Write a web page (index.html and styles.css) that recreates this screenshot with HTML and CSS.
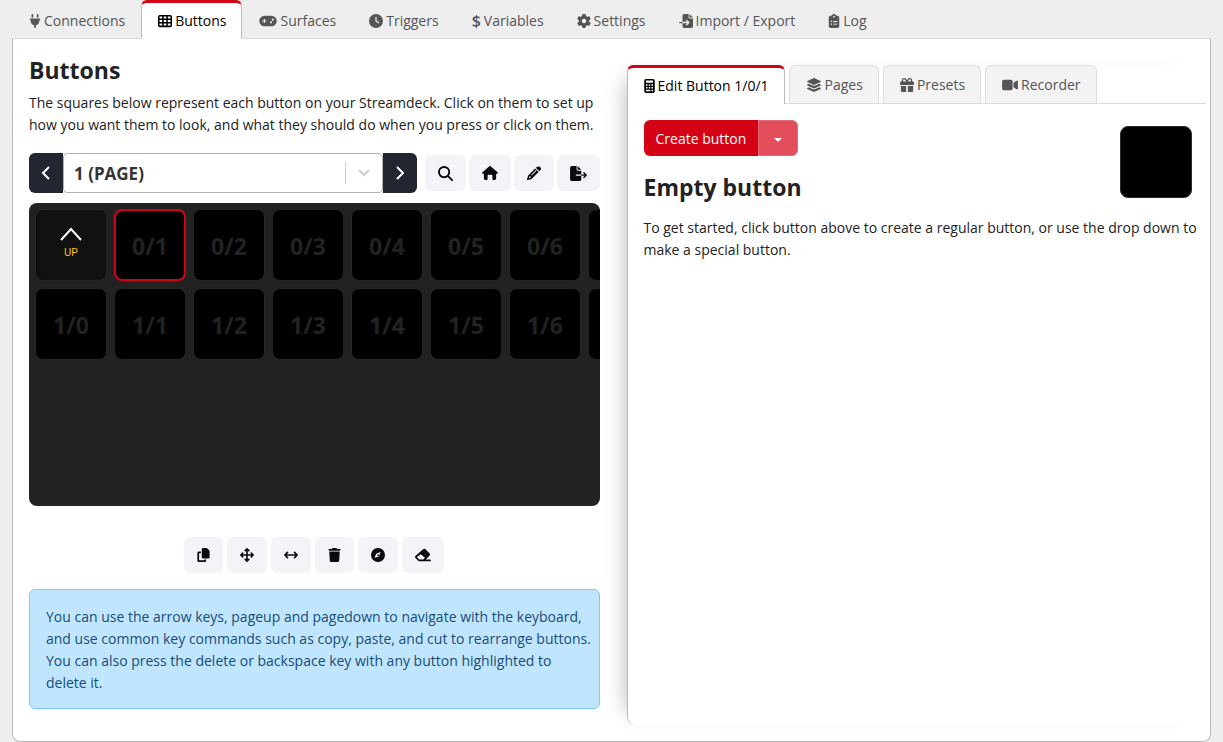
FILE: index.html
```
<!DOCTYPE html>
<html lang="en">
<head>
    <meta charset="UTF-8">
    <meta name="viewport" content="width=device-width, initial-scale=1.0">
    <title>Buttons</title>
    <link rel="stylesheet" href="styles.css">
</head>
<body>

<div class="app">
    <nav class="tabs main-tabs">
        <a class="tab" href="#connections"><svg class="icon w12" viewBox="0 0 384 512"><path d="M96 0C78.300 0 64 14.300 64 32v96h64V32c0-17.700-14.300-32-32-32zM288 0c-17.700 0-32 14.300-32 32v96h64V32c0-17.700-14.300-32-32-32zM32 160c-17.700 0-32 14.300-32 32s14.300 32 32 32v32c0 77.400 55 142 128 156.800V480c0 17.700 14.300 32 32 32s32-14.300 32-32V412.800C297 398 352 333.400 352 256V224c17.700 0 32-14.300 32-32s-14.300-32-32-32H32z"/></svg>Connections</a>
        <a class="tab active" href="#buttons"><svg class="icon w14" viewBox="0 0 512 512"><path fill-rule="evenodd" d="M64 32h384a64 64 0 0 1 64 64v320a64 64 0 0 1-64 64H64a64 64 0 0 1-64-64V96a64 64 0 0 1 64-64zM56 88v80h96V88zM208 88v80h96V88zM360 88v80h96V88zM56 216v80h96v-80zM208 216v80h96v-80zM360 216v80h96v-80zM56 344v80h96v-80zM208 344v80h96v-80zM360 344v80h96v-80z"/></svg>Buttons</a>
        <a class="tab" href="#surfaces"><svg class="icon w18" viewBox="0 0 640 512"><path fill-rule="evenodd" d="M192 64a192 192 0 0 0 0 384h256a192 192 0 0 0 0-384zM168 184h40v52h52v40h-52v52h-40v-52h-52v-40h52zM432 264a40 40 0 1 1 0 80a40 40 0 1 1 0-80zM496 168a40 40 0 1 1 0 80a40 40 0 1 1 0-80z"/></svg>Surfaces</a>
        <a class="tab" href="#triggers"><svg class="icon w14" viewBox="0 0 512 512"><path fill-rule="evenodd" d="M256 0a256 256 0 1 1 0 512A256 256 0 1 1 256 0zM232 120V256c0 8 4 15.500 10.700 20l96 64c11 7.400 25.900 4.400 33.300-6.700s4.400-25.900-6.700-33.300L280 243.200V120c0-13.300-10.700-24-24-24s-24 10.700-24 24z"/></svg>Triggers</a>
        <a class="tab" href="#variables"><span class="dollar">$</span>Variables</a>
        <a class="tab" href="#settings"><svg class="icon w14" viewBox="0 0 512 512"><path fill-rule="evenodd" d="M495.900 166.600c3.200 8.700 .5 18.400-6.400 24.600l-43.300 39.400c1.100 8.300 1.700 16.800 1.700 25.400s-.6 17.100-1.700 25.400l43.300 39.400c6.900 6.200 9.600 15.900 6.400 24.600c-4.400 11.900-9.700 23.300-15.800 34.300l-4.700 8.100c-6.600 11-14 21.400-22.100 31.200c-5.900 7.200-15.700 9.600-24.500 6.800l-55.700-17.700c-13.400 10.300-28.200 18.900-44 25.400l-12.500 57.100c-2 9.100-9 16.300-18.200 17.800c-13.800 2.300-28 3.500-42.500 3.500s-28.700-1.200-42.500-3.500c-9.200-1.500-16.200-8.700-18.200-17.800l-12.500-57.100c-15.800-6.500-30.600-15.100-44-25.400L83.100 425.900c-8.800 2.800-18.600 .3-24.500-6.800c-8.100-9.800-15.500-20.200-22.100-31.200l-4.700-8.100c-6.100-11-11.400-22.400-15.800-34.300c-3.200-8.700-.5-18.400 6.400-24.600l43.300-39.400C64.600 273.100 64 264.600 64 256s.6-17.100 1.700-25.400L22.400 191.200c-6.900-6.200-9.600-15.900-6.400-24.600c4.400-11.900 9.700-23.300 15.800-34.300l4.700-8.100c6.600-11 14-21.400 22.100-31.200c5.900-7.200 15.700-9.600 24.500-6.800l55.700 17.700c13.400-10.300 28.200-18.900 44-25.400l12.500-57.100c2-9.100 9-16.300 18.200-17.800C227.300 1.200 241.500 0 256 0s28.700 1.200 42.500 3.500c9.200 1.500 16.200 8.700 18.200 17.800l12.500 57.100c15.800 6.500 30.600 15.100 44 25.400l55.700-17.700c8.800-2.800 18.600-.3 24.500 6.800c8.100 9.800 15.500 20.200 22.100 31.200l4.700 8.100c6.100 11 11.400 22.400 15.800 34.300zM256 336a80 80 0 1 0 0-160 80 80 0 1 0 0 160z"/></svg>Settings</a>
        <a class="tab" href="#import-export"><svg class="icon w14" viewBox="0 0 512 512"><path d="M128 64c0-35.300 28.700-64 64-64H352V128c0 17.700 14.300 32 32 32H512V448c0 35.300-28.700 64-64 64H192c-35.300 0-64-28.700-64-64V336H302.100l-39 39c-9.400 9.400-9.400 24.600 0 33.900s24.600 9.400 33.900 0l80-80c9.400-9.400 9.400-24.600 0-33.900l-80-80c-9.400-9.400-24.600-9.400-33.900 0s-9.400 24.600 0 33.900l39 39H128V64zm0 224v48H24c-13.300 0-24-10.700-24-24s10.700-24 24-24H128zM512 128H384V0L512 128z"/></svg>Import / Export</a>
        <a class="tab" href="#log"><svg class="icon w12" viewBox="0 0 384 512"><path fill-rule="evenodd" d="M192 0c-42 0-77 27-90 64H64a64 64 0 0 0-64 64v320a64 64 0 0 0 64 64h256a64 64 0 0 0 64-64V128a64 64 0 0 0-64-64h-38c-13-37-48-64-90-64zM192 64a32 32 0 1 1 0 64a32 32 0 1 1 0-64zM72 248h48v48H72zM160 256h152v32H160zM72 344h48v48H72zM160 352h152v32H160z"/></svg>Log</a>
    </nav>

    <main class="panel">
        <section class="grid-side">
            <h1>Buttons</h1>
            <p class="intro">The squares below represent each button on your Streamdeck. Click on them to set up how you want them to look, and what they should do when you press or click on them.</p>

            <div class="toolbar">
                <div class="page-picker">
                    <button class="page-btn prev" aria-label="Previous page"><svg class="arrow" viewBox="0 0 16 16"><path d="M11 2L5 8l6 6"/></svg></button>
                    <div class="page-select">
                        <select aria-label="Page">
                            <option>1 (PAGE)</option>
                        </select>
                        <span class="indicator"><svg viewBox="0 0 16 16"><path d="M3 5l5 5 5-5"/></svg></span>
                    </div>
                    <button class="page-btn next" aria-label="Next page"><svg class="arrow" viewBox="0 0 16 16"><path d="M5 2l6 6-6 6"/></svg></button>
                </div>
                <button class="btn" aria-label="Search"><svg class="icon w15" viewBox="0 0 512 512"><path fill="none" stroke="currentColor" stroke-width="64" stroke-linecap="round" d="M208 32a176 176 0 1 1 0 352a176 176 0 1 1 0-352zM336 336l144 144"/></svg></button>
                <button class="btn" aria-label="Home"><svg class="icon w16" viewBox="0 0 576 512"><path d="M575.800 255.500c0 18-15 32.100-32 32.100h-32l.7 160.200c0 35-20 64-56 64H416c-22 0-40-18-40-40V352c0-18-14-32-32-32H232c-18 0-32 14-32 32v120c0 22-18 40-40 40H128c-36 0-64-28-64-64V287.600H32c-18 0-32-14-32-32.100c0-9 3-17 10-24L266.400 8c7-7 15-8 22-8s15 2 21 7L564.800 231.500c8 7 12 15 11 24z"/></svg></button>
                <button class="btn" aria-label="Edit page"><svg class="icon w14" viewBox="0 0 512 512"><path fill-rule="evenodd" d="M410 19a64 64 0 0 1 45 0l38 38a64 64 0 0 1 0 90l-46 46L319 65zM296 88l128 128-250 250a64 64 0 0 1-27 16L24 511a20 20 0 0 1-24-24l36-123a64 64 0 0 1 16-27zM326 150L148 328l20 20 178-178zM90 372l-24 74 74-24-8-42z"/></svg></button>
                <button class="btn" aria-label="Export page"><svg class="icon w17" viewBox="0 0 576 512"><path d="M0 64C0 28.700 28.700 0 64 0H224V128c0 17.700 14.300 32 32 32H384V288H216c-13.300 0-24 10.700-24 24s10.700 24 24 24H384V448c0 35.300-28.700 64-64 64H64c-35.300 0-64-28.700-64-64V64zM384 336V288H494.100l-39-39c-9.400-9.400-9.400-24.600 0-33.900s24.600-9.400 33.900 0l80 80c9.400 9.400 9.400 24.600 0 33.900l-80 80c-9.400 9.400-24.600 9.400-33.900 0s-9.400-24.600 0-33.900l39-39H384zm0-208H256V0L384 128z"/></svg></button>
            </div>

            <div class="button-grid">
                <button class="tile page-up"><svg viewBox="0 0 22 14"><path d="M1 13L11 2l10 11"/></svg><span>UP</span></button>
                <button class="tile selected">0/1</button>
                <button class="tile">0/2</button>
                <button class="tile">0/3</button>
                <button class="tile">0/4</button>
                <button class="tile">0/5</button>
                <button class="tile">0/6</button>
                <button class="tile" aria-label="Row 0, column 7"></button>
                <button class="tile">1/0</button>
                <button class="tile">1/1</button>
                <button class="tile">1/2</button>
                <button class="tile">1/3</button>
                <button class="tile">1/4</button>
                <button class="tile">1/5</button>
                <button class="tile">1/6</button>
                <button class="tile" aria-label="Row 1, column 7"></button>
            </div>

            <div class="actions">
                <button class="btn" aria-label="Copy"><svg class="icon w13" viewBox="0 0 448 512"><path d="M208 0h124a48 48 0 0 1 34 14l68 68a48 48 0 0 1 14 34v220a48 48 0 0 1-48 48H208a48 48 0 0 1-48-48V48a48 48 0 0 1 48-48zM48 128h80v64H64v256h192v-32h64v48a48 48 0 0 1-48 48H48a48 48 0 0 1-48-48V176a48 48 0 0 1 48-48z"/></svg></button>
                <button class="btn" aria-label="Move"><svg class="icon w14" viewBox="0 0 512 512"><path fill="none" stroke="currentColor" stroke-width="60" stroke-linecap="round" stroke-linejoin="round" d="M256 36v440M36 256h440M190 98l66-66 66 66M190 414l66 66 66-66M98 190l-66 66 66 66M414 190l66 66-66 66"/></svg></button>
                <button class="btn" aria-label="Swap"><svg class="icon w14" viewBox="0 0 512 512"><path fill="none" stroke="currentColor" stroke-width="60" stroke-linecap="round" stroke-linejoin="round" d="M36 256h440M126 162l-94 94 94 94M386 162l94 94-94 94"/></svg></button>
                <button class="btn" aria-label="Delete"><svg class="icon w13" viewBox="0 0 448 512"><path d="M135.200 17.700L128 32H32C14.300 32 0 46.300 0 64S14.300 96 32 96H416c17.700 0 32-14.300 32-32s-14.300-32-32-32H320l-7.200-14.300C307.400 6.800 296.300 0 284.200 0H163.800c-12.100 0-23.200 6.800-28.600 17.700zM416 128H32L53.200 467c1.600 25.300 22.600 45 47.900 45H346.900c25.300 0 46.300-19.700 47.900-45L416 128z"/></svg></button>
                <button class="btn" aria-label="Recentre"><svg class="icon w14" viewBox="0 0 512 512"><path fill-rule="evenodd" d="M256 0a256 256 0 1 1 0 512a256 256 0 1 1 0-512zM307 165l-104 40a32 32 0 0 0-18 18l-50 122c-4 14 4 20 16 16l126-50a32 32 0 0 0 18-18l50-126c6-14-4-24-16-18zM256 224a32 32 0 1 1 0 64a32 32 0 1 1 0-64z"/></svg></button>
                <button class="btn" aria-label="Erase"><svg class="icon w16" viewBox="0 0 576 512"><path fill-rule="evenodd" d="M290 50a64 64 0 0 1 90 0l142 142a64 64 0 0 1 0 90L388 416h156a32 32 0 0 1 0 64H150a64 64 0 0 1-45-19l-86-86a64 64 0 0 1 0-90zM206 224L64 330l86 86h147l62-62z"/></svg></button>
            </div>

            <div class="callout">You can use the arrow keys, pageup and pagedown to navigate with the keyboard, and use common key commands such as copy, paste, and cut to rearrange buttons. You can also press the delete or backspace key with any button highlighted to delete it.</div>
        </section>

        <section class="edit-side">
            <nav class="tabs edit-tabs">
                <a class="tab active" href="#edit"><svg class="icon w11" viewBox="0 0 384 512"><path fill-rule="evenodd" d="M64 0h256a64 64 0 0 1 64 64v384a64 64 0 0 1-64 64H64a64 64 0 0 1-64-64V64A64 64 0 0 1 64 0zM64 56v80h256V56zM64 192v56h56v-56zM164 192v56h56v-56zM264 192v56h56v-56zM64 292v56h56v-56zM164 292v56h56v-56zM264 292v56h56v-56zM64 392v56h156v-56zM264 392v56h56v-56z"/></svg>Edit Button 1/0/1</a>
                <a class="tab" href="#pages"><svg class="icon w16" viewBox="0 0 576 512"><path d="M264.500 5.200c14.900-6.900 32.100-6.900 47 0l218.600 101c8.500 3.900 13.900 12.400 13.900 21.800s-5.400 17.900-13.900 21.800l-218.600 101c-14.900 6.900-32.100 6.900-47 0L45.900 149.800C37.400 145.800 32 137.300 32 128s5.400-17.900 13.900-21.800L264.500 5.200zM476.900 209.600l53.200 24.600c8.500 3.900 13.900 12.400 13.900 21.800s-5.400 17.900-13.900 21.800l-218.600 101c-14.900 6.900-32.100 6.900-47 0L45.900 277.800C37.400 273.800 32 265.300 32 256s5.400-17.900 13.900-21.800l53.200-24.600 152 70.200c23.400 10.800 50.400 10.800 73.800 0l152-70.200zm-152 198.200l152-70.200 53.200 24.600c8.500 3.900 13.900 12.400 13.900 21.800s-5.400 17.900-13.900 21.800l-218.600 101c-14.900 6.900-32.100 6.900-47 0L45.900 405.800C37.400 401.800 32 393.300 32 384s5.400-17.900 13.900-21.800l53.200-24.600 152 70.200c23.400 10.800 50.400 10.800 73.800 0z"/></svg>Pages</a>
                <a class="tab" href="#presets"><svg class="icon w14" viewBox="0 0 512 512"><path d="M190.500 68.800L225.300 128H224 152c-22.100 0-40-17.900-40-40s17.900-40 40-40h2.200c14.900 0 28.800 7.900 36.300 20.800zM64 88c0 14.400 3.500 28 9.600 40H32c-17.700 0-32 14.300-32 32v64c0 17.700 14.300 32 32 32H480c17.700 0 32-14.300 32-32V160c0-17.700-14.300-32-32-32H438.400c6.100-12 9.600-25.600 9.600-40c0-48.600-39.400-88-88-88h-2.200c-31.900 0-61.500 16.900-77.700 44.400L256 85.500l-24.100-41C215.700 16.900 186.100 0 154.200 0H152C103.400 0 64 39.400 64 88zm336 0c0 22.100-17.900 40-40 40H288h-1.300l34.800-59.200C329.100 55.900 342.900 48 357.800 48H360c22.100 0 40 17.900 40 40zM32 288V464c0 26.500 21.500 48 48 48H224V288H32zM288 512H432c26.500 0 48-21.500 48-48V288H288V512z"/></svg>Presets</a>
                <a class="tab" href="#recorder"><svg class="icon w16" viewBox="0 0 576 512"><path d="M0 128C0 92.700 28.700 64 64 64H320c35.300 0 64 28.700 64 64V384c0 35.300-28.700 64-64 64H64c-35.300 0-64-28.700-64-64V128zM559.100 99.800c10.400 5.600 16.900 16.400 16.900 28.200V384c0 11.800-6.500 22.600-16.900 28.200s-23 5-32.900-1.600l-96-64L416 337.100V174.900l14.200-9.500 96-64c9.800-6.500 22.400-7.200 32.900-1.600z"/></svg>Recorder</a>
            </nav>

            <div class="edit-body">
                <div class="edit-head">
                    <div>
                        <div class="create">
                            <button class="create-btn">Create button</button>
                            <button class="create-more" aria-label="More button types"></button>
                        </div>
                        <h2>Empty button</h2>
                    </div>
                    <div class="preview"></div>
                </div>
                <p>To get started, click button above to create a regular button, or use the drop down to make a special button.</p>
            </div>
        </section>
    </main>
</div>

</body>
</html>
```
FILE: styles.css
```
* {
    box-sizing: border-box;
}

body {
    margin: 0;
    background-color: #eee;
    color: #222;
    font-family: 'Open Sans', sans-serif;
    font-size: 14px;
    line-height: 22px;
}

button,
select {
    font-family: inherit;
    font-size: inherit;
    border: none;
    padding: 0;
    cursor: pointer;
}

.app {
    display: flex;
    flex-direction: column;
    min-height: 100vh;
    padding: 0 12px;
}

/* Icons */
.icon {
    height: 14px;
    flex-shrink: 0;
    fill: currentColor;
}

.w11 { width: 11px; }
.w12 { width: 12px; }
.w13 { width: 13px; }
.w14 { width: 14px; }
.w15 { width: 15px; height: 15px; }
.w16 { width: 16px; }
.w17 { width: 17px; height: 15px; }
.w18 { width: 18px; }

/* Tabs */
.tabs {
    display: flex;
    border-bottom: 1px solid #d8dbe0;
}

.tab {
    display: flex;
    align-items: center;
    gap: 3px;
    height: 39px;
    margin-bottom: -1px;
    padding: 0 15px 0 16px;
    border: 1px solid transparent;
    border-top: 3px solid transparent;
    border-radius: 6px 6px 0 0;
    color: #555;
    text-decoration: none;
    white-space: nowrap;
}

.tab.active {
    background-color: #fff;
    border-color: #d50215 #bbb #fff;
    color: #000;
}

.dollar {
    font-size: 16px;
    font-weight: 600;
}

/* Page */
.panel {
    flex: 1;
    display: flex;
    gap: 27px;
    padding: 0 4px 16px 16px;
    background-color: #fff;
    border: 1px solid #bbb;
    border-top: none;
    border-radius: 0 0 8px 8px;
}

.grid-side {
    flex: 571 1 0;
    min-width: 0;
    padding-top: 16px;
}

h1,
h2 {
    margin: 0;
    font-size: 23px;
    line-height: 30px;
}

p {
    margin: 0;
}

.intro {
    margin: 7px 0 17px;
}

.toolbar {
    display: flex;
    align-items: center;
    gap: 3px;
    margin-bottom: 10px;
}

.page-picker {
    flex: 1;
    display: flex;
    height: 40px;
    margin-right: 5px;
}

.page-btn {
    width: 34px;
    background-color: #212631;
    color: #fff;
}

.prev {
    border-radius: 6px 0 0 6px;
}

.next {
    border-radius: 0 6px 6px 0;
}

.arrow {
    display: block;
    width: 16px;
    height: 16px;
    margin: 0 auto;
    fill: none;
    stroke: currentColor;
    stroke-width: 2;
}

.page-select {
    flex: 1;
    position: relative;
}

.page-select select {
    appearance: none;
    width: 100%;
    height: 40px;
    padding: 0 10px;
    border: 1px solid #b3b3b3;
    border-radius: 4px;
    background-color: #fff;
    color: #333;
    font-size: 17px;
    font-weight: bold;
}

/* lies over the select, on its right */
.indicator {
    position: absolute;
    top: 9px;
    right: 1px;
    width: 37px;
    height: 22px;
    border-left: 1px solid #ccc;
    text-align: center;
    pointer-events: none;
}

.indicator svg {
    width: 16px;
    height: 22px;
    fill: none;
    stroke: #ccc;
    stroke-width: 2;
}

.btn {
    display: flex;
    align-items: center;
    height: 36px;
    padding: 0 13px;
    border-radius: 6px;
    background-color: #f3f4f7;
    color: #080a0c;
}

/* Button grid */
.button-grid {
    display: grid;
    grid-template-columns: repeat(8, 72px);
    grid-auto-rows: 72px;
    align-content: start;
    gap: 7px;
    height: 303px;
    padding: 6px;
    overflow: hidden;
    background-color: #222;
    border-radius: 8px;
}

.tile {
    padding-top: 2px;
    border: 1px solid #262626;
    border-radius: 8px;
    background-color: #000;
    color: #222;
    font-size: 23px;
    font-weight: bold;
}

.tile.selected {
    border: 2px solid #d50215;
}

.tile.page-up {
    display: flex;
    flex-direction: column;
    align-items: center;
    justify-content: center;
    gap: 6px;
    padding: 0 0 5px;
    background-color: #111;
    color: #fc0;
    font: 10px/12px 'Liberation Sans', sans-serif;
}

.page-up svg {
    width: 22px;
    height: 14px;
    fill: none;
    stroke: #fff;
    stroke-width: 2;
}

.actions {
    display: flex;
    justify-content: center;
    gap: 4px;
    margin: 31px 0 16px;
}

.callout {
    padding: 16px 4px 14px 16px;
    border: 1px solid #80c6ff;
    border-radius: 6px;
    background-color: #c0e6ff;
    color: #184c77;
}

/* Edit panel */
.edit-side {
    flex: 579 1 0;
    min-width: 0;
    margin-top: 26px;
    border-left: 1px solid #bbb;
    border-radius: 8px;
    background-color: #fff;
    box-shadow: -15px 0 20px -15px rgba(0, 0, 0, 0.3);
}

.edit-tabs {
    gap: 4px;
    margin-left: -1px;
}

.edit-tabs .tab {
    border: 1px solid #ddd;
    border-bottom: none;
    height: 38px;
    background-color: #f3f3f3;
}

.edit-tabs .tab.active {
    height: 39px;
    border: 1px solid #bbb;
    border-top: 3px solid #d50215;
    border-bottom: none;
    background-color: #fff;
}

.edit-body {
    padding: 16px 4px 16px 16px;
}

.edit-head {
    display: flex;
    justify-content: space-between;
    margin-bottom: 15px;
    padding-right: 10px;
}

.create {
    display: flex;
    height: 36px;
    margin-bottom: 16px;
}

.create-btn {
    padding: 0 12px;
    border-radius: 6px 0 0 6px;
    background-color: #d50215;
    color: #fff;
}

.create-more {
    width: 40px;
    border: 1px solid #e46a75;
    border-radius: 0 6px 6px 0;
    background-color: #e24e5c;
}

.create-more::after {
    content: '';
    display: inline-block;
    border: 4px solid transparent;
    border-top-color: #fff;
    border-bottom: none;
    vertical-align: middle;
}

.preview {
    width: 72px;
    height: 72px;
    margin-top: 6px;
    border: 1px solid #2b2b2b;
    border-radius: 8px;
    background-color: #000;
}
```
